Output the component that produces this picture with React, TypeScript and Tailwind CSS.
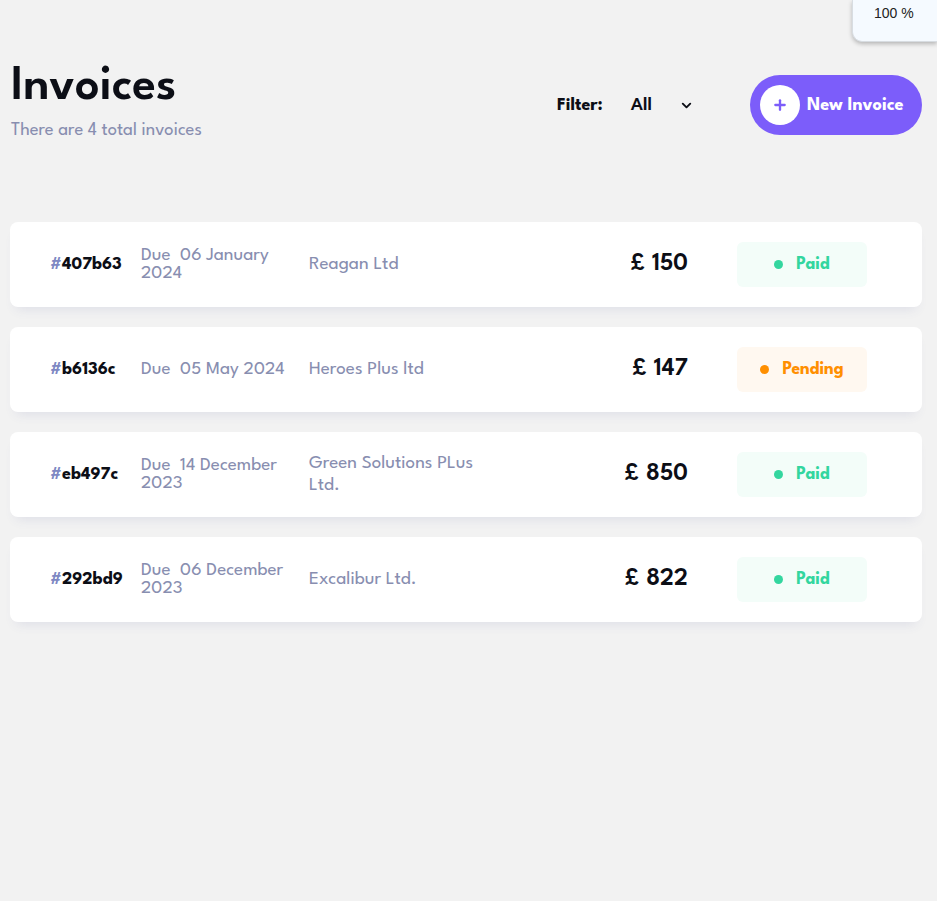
import { ChevronDown, Plus } from "lucide-react";

type Invoice = {
  id: string;
  due: string;
  client: string;
  amount: number;
  status: "Paid" | "Pending";
};

const invoices: Invoice[] = [
  { id: "407b63", due: "06 January 2024", client: "Reagan Ltd", amount: 150, status: "Paid" },
  { id: "b6136c", due: "05 May 2024", client: "Heroes Plus ltd", amount: 147, status: "Pending" },
  { id: "eb497c", due: "14 December 2023", client: "Green Solutions PLus Ltd.", amount: 850, status: "Paid" },
  { id: "292bd9", due: "06 December 2023", client: "Excalibur Ltd.", amount: 822, status: "Paid" },
];

const StatusBadge = ({ status }: { status: Invoice["status"] }) => {
  const paid = status === "Paid";
  return (
    <div
      className={`flex items-center justify-center gap-[13px] w-[130px] h-[45px] rounded-[6px] font-bold text-[17.5px] ${
        paid ? "bg-[#f3fdf9] text-[#33d69f]" : "bg-[#fff8f0] text-[#ff8f00]"
      }`}
    >
      <span className={`w-[9px] h-[9px] rounded-full ${paid ? "bg-[#33d69f]" : "bg-[#ff8f00]"}`}></span>
      <span className="pt-[2px]">{status}</span>
    </div>
  );
};

const InvoiceRow = ({ inv }: { inv: Invoice }) => (
  <div className="flex items-center h-[85px] bg-white rounded-[8px] shadow-[0_8px_12px_-6px_rgba(72,84,159,0.12)] pl-[40px]">
    <div className="w-[91px] font-bold text-[18px] text-[#0c0e16]">
      <span className="text-[#7e88c3]">#</span>
      {inv.id}
    </div>
    <div className="w-[152px] mr-[16px] text-[19px] text-[#888eb0] leading-[18px]">
      Due&nbsp; {inv.due}
    </div>
    <div className="w-[185px] text-[19px] text-[#888eb0] leading-[22px]">{inv.client}</div>
    <div className="flex-1 text-right text-[25px] font-semibold text-[#0c0e16]">£ {inv.amount}</div>
    <div className="ml-[49px] mr-[55px]">
      <StatusBadge status={inv.status} />
    </div>
  </div>
);

export default function App() {
  return (
    <div
      className="relative min-h-[901px] bg-[#f2f2f2] pl-[10px] pr-[15px] pt-[62px]"
      style={{ fontFamily: '"League Spartan", Inter, "Noto Sans", sans-serif' }}
    >
      {/* zoom indicator */}
      <div className="absolute top-0 right-0 w-[85px] h-[42px] bg-[#f5faff] rounded-bl-[10px] shadow-[0_2px_4px_rgba(0,0,0,0.25)] border-l border-b border-[#d8dde2] text-[14px] text-[#222] pl-[21px] pt-[3px] font-['Liberation_Sans',sans-serif]">
        100 %
      </div>

      <header className="flex items-center">
        <div className="flex-1 pl-[1px]">
          <h1 className="text-[48.5px] font-semibold text-[#0c0e16] leading-[52px]">Invoices</h1>
          <p className="text-[18.5px] text-[#888eb0] leading-[22px] mt-[6px]">There are 4 total invoices</p>
        </div>
        <div className="flex items-center mr-[56px] mt-[6px] text-[#0c0e16]">
          <span className="font-bold text-[18px]">Filter:</span>
          <span className="ml-[28px] font-semibold text-[19px] pt-[2px]">All</span>
          <ChevronDown className="ml-[27px] w-[15px] h-[15px]" strokeWidth={3} />
        </div>
        <button className="flex items-center h-[60px] w-[172px] rounded-full bg-[#7c5dfa] pl-[10px] mt-[6px] text-white font-bold text-[18.3px]">
          <span className="flex items-center justify-center w-[40px] h-[40px] rounded-full bg-white">
            <Plus className="w-[16px] h-[16px] text-[#7c5dfa]" strokeWidth={3.5} />
          </span>
          <span className="ml-[7px] pt-[2px]">New Invoice</span>
        </button>
      </header>

      <div className="mt-[80px] flex flex-col gap-[20px]">
        {invoices.map((inv) => (
          <InvoiceRow key={inv.id} inv={inv} />
        ))}
      </div>
    </div>
  );
}
